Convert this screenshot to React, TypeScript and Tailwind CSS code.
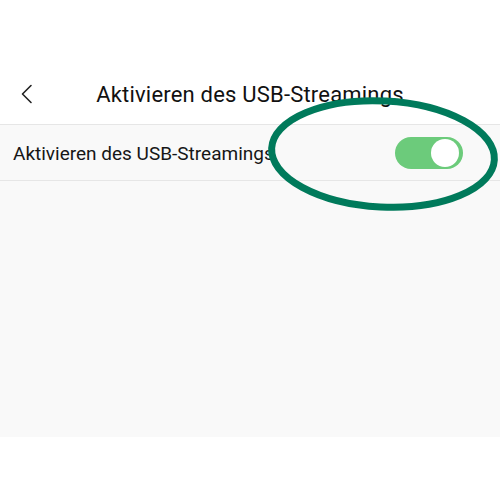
import React from "react";

export default function App() {
  return (
    <div className="relative w-[500px] h-[500px] bg-white overflow-hidden" style={{ fontFamily: "Roboto, 'Noto Sans', sans-serif" }}>
      <div className="h-[64px]" />
      <div className="relative h-[60px] flex items-center justify-center">
        <svg className="absolute left-[20px] top-[20px]" width="14" height="20" viewBox="0 0 14 20" fill="none">
          <path d="M11 1.5 L2.5 10 L11 18.5" stroke="#222" strokeWidth="1.6" strokeLinecap="round" strokeLinejoin="round" />
        </svg>
        <span className="text-[22px] tracking-[0.2px] text-[#111] leading-none mt-[2px]">Aktivieren des USB-Streamings</span>
      </div>
      <div className="bg-[#f9f9f9] h-[313px] border-t border-[#e6e6e6]">
        <div className="h-[56px] flex items-center justify-between pl-[13px] pr-[37px] border-b border-[#e6e6e6]">
          <span className="text-[19px] text-[#161616] leading-none mt-[2px]">Aktivieren des USB-Streamings</span>
          <div className="w-[68px] h-[32px] rounded-full bg-[#6ccb7b] flex items-center justify-end pr-[4px]">
            <div className="w-[28px] h-[28px] rounded-full bg-white" />
          </div>
        </div>
      </div>
      <svg className="absolute left-0 top-0 pointer-events-none" width="500" height="500" viewBox="0 0 500 500">
        <ellipse cx="383" cy="154" rx="111.5" ry="53" fill="none" stroke="#007a5b" strokeWidth="7" transform="rotate(3 383 154)" />
      </svg>
    </div>
  );
}
